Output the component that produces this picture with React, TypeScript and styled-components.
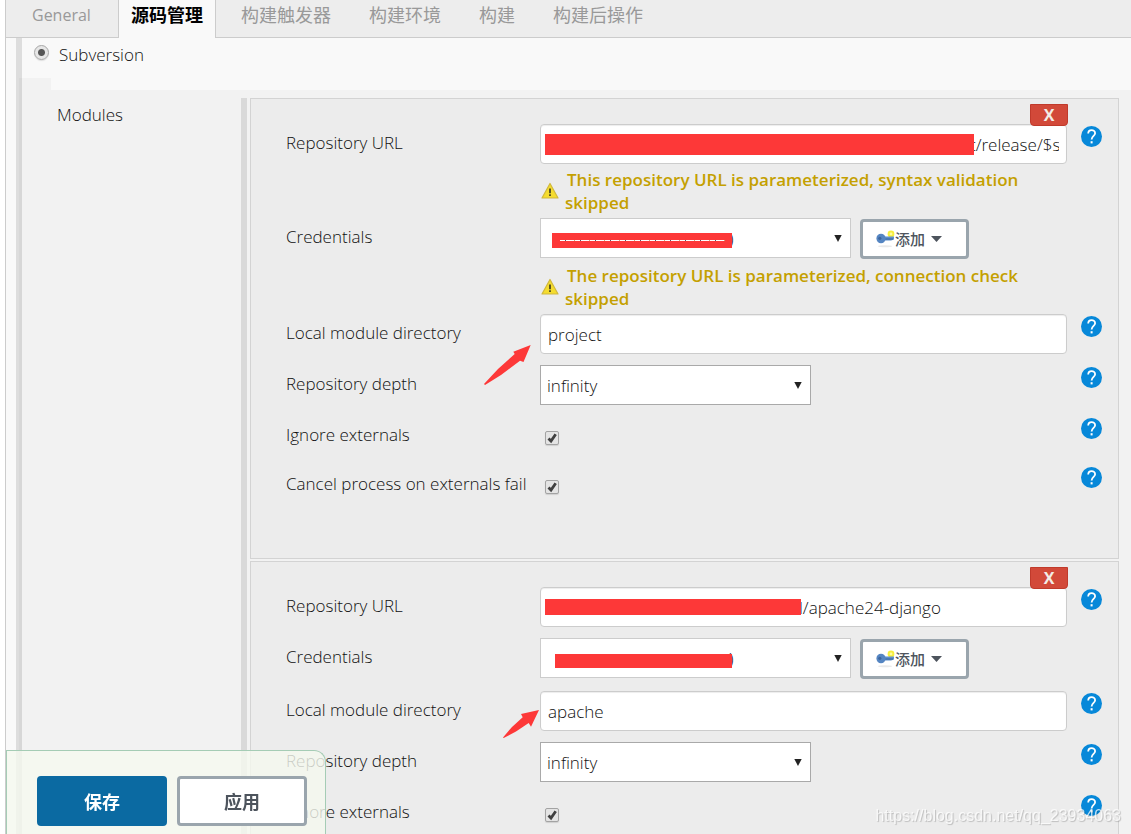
import React, { useId } from "react";
import styled, { createGlobalStyle } from "styled-components";

const sans = `"Open Sans", "Noto Sans CJK SC", sans-serif`;

const GlobalStyle = createGlobalStyle`
  *, *::before, *::after { box-sizing: border-box; }
  body {
    margin: 0;
    background: #fff;
    color: #111;
    font-family: ${sans};
    font-size: 17px;
    font-weight: 300;
    line-height: 23px;
  }
  input, select, button { font: inherit; color: inherit; margin: 0; }
`;

const Page = styled.div`
  height: 100vh;
  overflow: hidden;
  padding-left: 5px;
`;

const Shell = styled.div`
  border-left: 1px solid #ccc;
  background: #f9f9f9;
  min-height: 100vh;
`;

const TabBar = styled.nav`
  display: flex;
  height: 38px;
  padding-left: 7px;
  background: #ededed;
  border-bottom: 1px solid #ccc;
`;

const Tab = styled.a<{ $active?: boolean }>`
  height: 38px;
  padding: 4px ${(p) => (p.$active ? 12 : 19)}px 0;
  margin: ${(p) => (p.$active ? "0 6px 0 8px" : "0")};
  font-size: 18px;
  color: ${(p) => (p.$active ? "#000" : "#999")};
  font-weight: ${(p) => (p.$active ? 700 : 400)};
  background: ${(p) => (p.$active ? "#f9f9f9" : "transparent")};
  border: solid #ccc;
  border-width: ${(p) => (p.$active ? "0 1px" : "0")};
  text-decoration: none;
  white-space: nowrap;
  &:lang(en) { font-size: 16px; }
`;

const Body = styled.main`
  margin-left: 10px;
  border-left: 6px solid #ddd;
`;

const ScmChoice = styled.label`
  display: flex;
  gap: 10px;
  height: 40px;
  padding: 5px 0 0 12px;
`;

const Radio = styled.input`
  appearance: none;
  width: 15px;
  height: 15px;
  margin-top: 2px;
  border: 1px solid #a6a6a6;
  border-radius: 50%;
  background: radial-gradient(circle, #555 0 3px, #e6e6e6 4px);
  box-shadow: 0 1px 1px #ddd;
`;

const Nested = styled.section`
  margin-left: -3px;
  border-left: 3px solid #d7d7d7;
  background: #f2f2f2;
`;

const Notch = styled.div`
  height: 12px;
  margin-left: 29px;
  background: #f9f9f9;
`;

const Modules = styled.div`
  display: flex;
  padding: 8px 12px 0 0;
`;

const ModulesTitle = styled.h2`
  flex: 0 0 219px;
  margin: 0;
  padding: 5px 0 0 35px;
  font-size: 17px;
  font-weight: 300;
`;

const PanelList = styled.div`
  flex: 1;
  min-width: 0;
  display: flex;
  flex-direction: column;
  gap: 2px;
  padding-left: 3px;
  border-left: 6px solid #d9d9d9;
`;

const Panel = styled.div`
  position: relative;
  padding: 25px 16px 44px 35px;
  background: #ececec;
  border: 1px solid #d3d3d3;
`;

const DeleteButton = styled.button`
  position: absolute;
  z-index: 1;
  top: 5px;
  right: 50px;
  width: 38px;
  height: 22px;
  padding: 0;
  border: 1px solid #c03a2b;
  border-radius: 0 0 4px 4px;
  background: #d24939;
  color: #f3ece6;
  font-size: 16px;
  font-weight: 700;
  line-height: 20px;
`;

const FormRow = styled.div<{ $compact?: boolean }>`
  display: flex;
  align-items: flex-start;
  min-height: ${(p) => (p.$compact ? "49px" : "51px")};
`;

const RowLabel = styled.label`
  flex: 0 0 254px;
  line-height: 38px;
  white-space: nowrap;
`;

const Control = styled.div`
  position: relative;
  flex: 1;
  min-width: 0;
`;

const HelpSlot = styled.div`
  flex: 0 0 35px;
  padding: 2px 0 0 14px;
`;

const HelpButton = styled.button`
  display: block;
  width: 21px;
  height: 21px;
  padding: 0;
  border: 0;
  background: none;
  svg { display: block; }
`;

const TextInput = styled.input<{ $indent?: number }>`
  display: block;
  width: 100%;
  height: 40px;
  padding: 1px 7px 0 ${(p) => p.$indent ?? 7}px;
  border: 1px solid #ccc;
  border-radius: 4px;
  background: #fff;
  box-shadow: inset 0 1px 1px rgba(0, 0, 0, 0.075);
`;

const SelectWrap = styled.div<{ $width: number; $border: string }>`
  position: relative;
  flex: 0 0 auto;
  width: ${(p) => p.$width}px;
  height: 40px;
  border: 1px solid ${(p) => p.$border};
  background: #fff;
  svg {
    position: absolute;
    right: 8px;
    top: 16px;
    pointer-events: none;
  }
`;

const SelectBox = styled.select<{ $indent?: number }>`
  appearance: none;
  display: block;
  width: 100%;
  height: 38px;
  padding: 1px 20px 0 ${(p) => p.$indent ?? 6}px;
  border: 0;
  background: transparent;
`;

const Redaction = styled.span<{ $left: number; $top: number; $width: number; $height: number }>`
  position: absolute;
  left: ${(p) => p.$left}px;
  top: ${(p) => p.$top}px;
  width: ${(p) => p.$width}px;
  height: ${(p) => p.$height}px;
  background: #fd3838;
  pointer-events: none;
`;

const RedactionSlit = styled.span`
  position: absolute;
  left: 8px;
  right: 7px;
  top: 7px;
  height: 1px;
  background: repeating-linear-gradient(90deg, #fff 0 5px, #556 5px 6px, #fff 6px 14px, #c9a878 14px 15px);
`;

const CredentialLine = styled.div`
  display: flex;
  gap: 9px;
  height: 42px;
`;

const AddButton = styled.button`
  display: flex;
  align-items: center;
  width: 109px;
  height: 40px;
  margin-top: 1px;
  padding: 0 0 0 13px;
  border: 3px solid #9aa5ad;
  border-radius: 4px;
  background: #fff;
  color: #4d545d;
  font-size: 15px;
  font-weight: 500;
  svg:last-child { margin-left: 6px; }
`;

const Warning = styled.div`
  display: flex;
  gap: 6px;
  margin-top: 4px;
  padding-bottom: 4px;
  max-width: 500px;
  color: #c4a000;
  font-weight: 600;
  svg { flex: none; margin-top: 14px; }
  span { text-indent: 2px; }
`;

const Check = styled.input`
  appearance: none;
  display: block;
  width: 14px;
  height: 14px;
  margin: 15px 0 0 5px;
  border: 1px solid #a3a3a3;
  border-radius: 2px;
  box-shadow: 0 1px 1px #d0d0d0;
  background: #e4e4e4 url("data:image/svg+xml,%3Csvg xmlns='http://www.w3.org/2000/svg' viewBox='0 0 12 12'%3E%3Cpath d='M2.500 6.500L5 9l4.700-6.800' fill='none' stroke='%23404040' stroke-width='2.800'/%3E%3C/svg%3E");
`;

const Pointer = styled.svg<{ $left: number; $top: number }>`
  position: absolute;
  left: ${(p) => p.$left}px;
  top: ${(p) => p.$top}px;
`;

const ActionBar = styled.footer`
  position: fixed;
  z-index: 2;
  left: 6px;
  bottom: 0;
  display: flex;
  gap: 10px;
  padding: 25px 18px 8px 30px;
  border: 1px solid #a5ccb5;
  border-bottom: 0;
  border-radius: 0 12px 0 0;
  background: rgba(245, 249, 239, 0.8);
`;

const ActionButton = styled.button<{ $primary?: boolean }>`
  width: 130px;
  height: 50px;
  padding: 3px 0 0;
  border: 3px solid ${(p) => (p.$primary ? "#0b6aa2" : "#9aa5ad")};
  border-radius: 4px;
  background: ${(p) => (p.$primary ? "#0b6aa2" : "#fff")};
  color: ${(p) => (p.$primary ? "#fff" : "#4d545d")};
  font-size: 18px;
  font-weight: 700;
`;

const Watermark = styled.div`
  position: fixed;
  z-index: 3;
  right: 10px;
  bottom: 7px;
  color: rgba(255, 255, 255, 0.75);
  font-family: "Liberation Sans", sans-serif;
  font-size: 16px;
  font-weight: 400;
  text-shadow: 1px 1px 1px rgba(0, 0, 0, 0.2);
  pointer-events: none;
`;

function Help() {
  return (
    <HelpSlot>
      <HelpButton type="button" aria-label="Help">
        <svg width="21" height="21" viewBox="0 0 21 21">
          <circle cx="10.5" cy="10.5" r="10.5" fill="#0788d9" />
          <path d="M7.2 7.6C7.2 2.9 14.100 3.100 14.100 7.300C14.100 9.900 10.600 10 10.600 13.600" fill="none" stroke="#fff" strokeWidth="1.8" />
          <rect x="9.6" y="15.2" width="2" height="2.200" fill="#fff" />
        </svg>
      </HelpButton>
    </HelpSlot>
  );
}

function WarningNote({ children }: { children: React.ReactNode }) {
  return (
    <Warning role="status">
      <svg width="19" height="18" viewBox="0 0 19 18">
        <path d="M10 1.5L18 16H2Z" fill="#f5dc2e" stroke="#d0b83c" strokeWidth="1.2" strokeLinejoin="round" />
        <path d="M10 6.500V11.300M10 12.300V14" stroke="#4a4520" strokeWidth="1.800" />
      </svg>
      <span>{children}</span>
    </Warning>
  );
}

function Triangle() {
  return (
    <svg width="8" height="7" viewBox="0 0 8 7">
      <path d="M0.3 0H7.7L4 7Z" fill="#222" />
    </svg>
  );
}

function KeyIcon() {
  return (
    <svg width="19" height="18" viewBox="0 0 19 18">
      <ellipse cx="9" cy="16.2" rx="7" ry="1" fill="#e9e9e9" />
      <circle cx="15" cy="4" r="2.4" fill="#fffb9a" stroke="#f6ee3c" strokeWidth="2" />
      <path d="M8 6.5H18V9.5L15 10.500H8Z" fill="#5f8fca" />
      <path d="M8 9H17" stroke="#34629c" strokeWidth="1" />
      <ellipse cx="5" cy="8.5" rx="4.600" ry="4.800" fill="#5585c2" />
      <circle cx="3.8" cy="8.3" r="1.6" fill="#3c659c" />
    </svg>
  );
}

type ArrowProps = { left: number; top: number; width: number; height: number; shape: string };

function Arrow({ left, top, width, height, shape }: ArrowProps) {
  return (
    <Pointer $left={left} $top={top} width={width} height={height} viewBox={`0 0 ${width} ${height}`} aria-hidden="true">
      <path d={shape} fill="#fd3838" />
    </Pointer>
  );
}

const longArrow = "M46.7 0L39.5 17L36 15.7L17 30L1 40L0 39L14 24L30.7 9L29.3 6.7Z";
const shortArrow = "M36 1L28 17.700L25.700 14L13 22.500L0.700 29L0 28.400L9 18L19.700 8.300L18 5Z";

type Bar = { left: number; top: number; width: number; height: number };

const Masked = ({ bar, slit }: { bar: Bar; slit?: boolean }) => (
  <Redaction $left={bar.left} $top={bar.top} $width={bar.width} $height={bar.height}>
    {slit && <RedactionSlit />}
  </Redaction>
);

type ModuleProps = {
  url: string;
  urlIndent: number;
  urlBar: Bar;
  credentialBar: Bar;
  slit?: boolean;
  warnings?: [string, string];
  directory: string;
  arrow: ArrowProps;
  cancelOption?: boolean;
};

function Module(p: ModuleProps) {
  const id = useId();
  return (
    <Panel>
      <DeleteButton type="button">X</DeleteButton>
      <FormRow>
        <RowLabel htmlFor={id + "url"}>Repository URL</RowLabel>
        <Control>
          <TextInput id={id + "url"} defaultValue={p.url} $indent={p.urlIndent} />
          <Masked bar={p.urlBar} />
          {p.warnings && <WarningNote>{p.warnings[0]}</WarningNote>}
        </Control>
        <Help />
      </FormRow>
      <FormRow>
        <RowLabel htmlFor={id + "cred"}>Credentials</RowLabel>
        <Control>
          <CredentialLine>
            <SelectWrap $width={311} $border="#ccc">
              <SelectBox id={id + "cred"} $indent={188}>
                <option>)</option>
              </SelectBox>
              <Triangle />
            </SelectWrap>
            <AddButton type="button">
              <KeyIcon />
              添加
              <svg width="11" height="6" viewBox="0 0 11 6">
                <path d="M0 0H11L5.500 6Z" fill="#4d545d" />
              </svg>
            </AddButton>
          </CredentialLine>
          <Masked bar={p.credentialBar} slit={p.slit} />
          {p.warnings ? <WarningNote>{p.warnings[1]}</WarningNote> : <RowGap />}
        </Control>
        <HelpSlot />
      </FormRow>
      <FormRow>
        <RowLabel htmlFor={id + "dir"}>Local module directory</RowLabel>
        <Control>
          <TextInput id={id + "dir"} defaultValue={p.directory} />
          <Arrow {...p.arrow} />
        </Control>
        <Help />
      </FormRow>
      <FormRow>
        <RowLabel htmlFor={id + "depth"}>Repository depth</RowLabel>
        <Control>
          <SelectWrap $width={271} $border="#a9a9a9">
            <SelectBox id={id + "depth"}>
              <option>infinity</option>
            </SelectBox>
            <Triangle />
          </SelectWrap>
        </Control>
        <Help />
      </FormRow>
      <FormRow $compact>
        <RowLabel htmlFor={id + "ignore"}>Ignore externals</RowLabel>
        <Control>
          <Check type="checkbox" id={id + "ignore"} defaultChecked />
        </Control>
        <Help />
      </FormRow>
      {p.cancelOption && (
        <FormRow $compact>
          <RowLabel htmlFor={id + "cancel"}>Cancel process on externals fail</RowLabel>
          <Control>
            <Check type="checkbox" id={id + "cancel"} defaultChecked />
          </Control>
          <Help />
        </FormRow>
      )}
    </Panel>
  );
}

const RowGap = styled.div`
  height: 11px;
`;

const tabs = ["General", "源码管理", "构建触发器", "构建环境", "构建", "构建后操作"];

export default function App() {
  return (
    <Page>
      <GlobalStyle />
      <Shell>
        <TabBar>
          {tabs.map((t, i) => (
            <Tab key={t} href="#" lang={i === 0 ? "en" : "zh"} $active={i === 1}>
              {t}
            </Tab>
          ))}
        </TabBar>
        <Body>
          <ScmChoice>
            <Radio type="radio" name="scm" defaultChecked />
            Subversion
          </ScmChoice>
          <Nested>
            <Notch />
            <Modules>
              <ModulesTitle>Modules</ModulesTitle>
              <PanelList>
                <Module
                  url="t/release/$svn"
                  urlIndent={429}
                  urlBar={{ left: 5, top: 10, width: 429, height: 21 }}
                  credentialBar={{ left: 12, top: 15, width: 180, height: 15 }}
                  slit
                  warnings={[
                    "This repository URL is parameterized, syntax validation skipped",
                    "The repository URL is parameterized, connection check skipped",
                  ]}
                  directory="project"
                  arrow={{ left: -56, top: 31, width: 47, height: 40, shape: longArrow }}
                  cancelOption
                />
                <Module
                  url="l/apache24-django"
                  urlIndent={258}
                  urlBar={{ left: 5, top: 12, width: 256, height: 16 }}
                  credentialBar={{ left: 15, top: 16, width: 177, height: 14 }}
                  directory="apache"
                  arrow={{ left: -37, top: 18, width: 36, height: 29, shape: shortArrow }}
                />
              </PanelList>
            </Modules>
          </Nested>
        </Body>
      </Shell>
      <ActionBar>
        <ActionButton type="button" $primary>
          保存
        </ActionButton>
        <ActionButton type="button">应用</ActionButton>
      </ActionBar>
      <Watermark>https://blog.csdn.net/qq_23934063</Watermark>
    </Page>
  );
}
